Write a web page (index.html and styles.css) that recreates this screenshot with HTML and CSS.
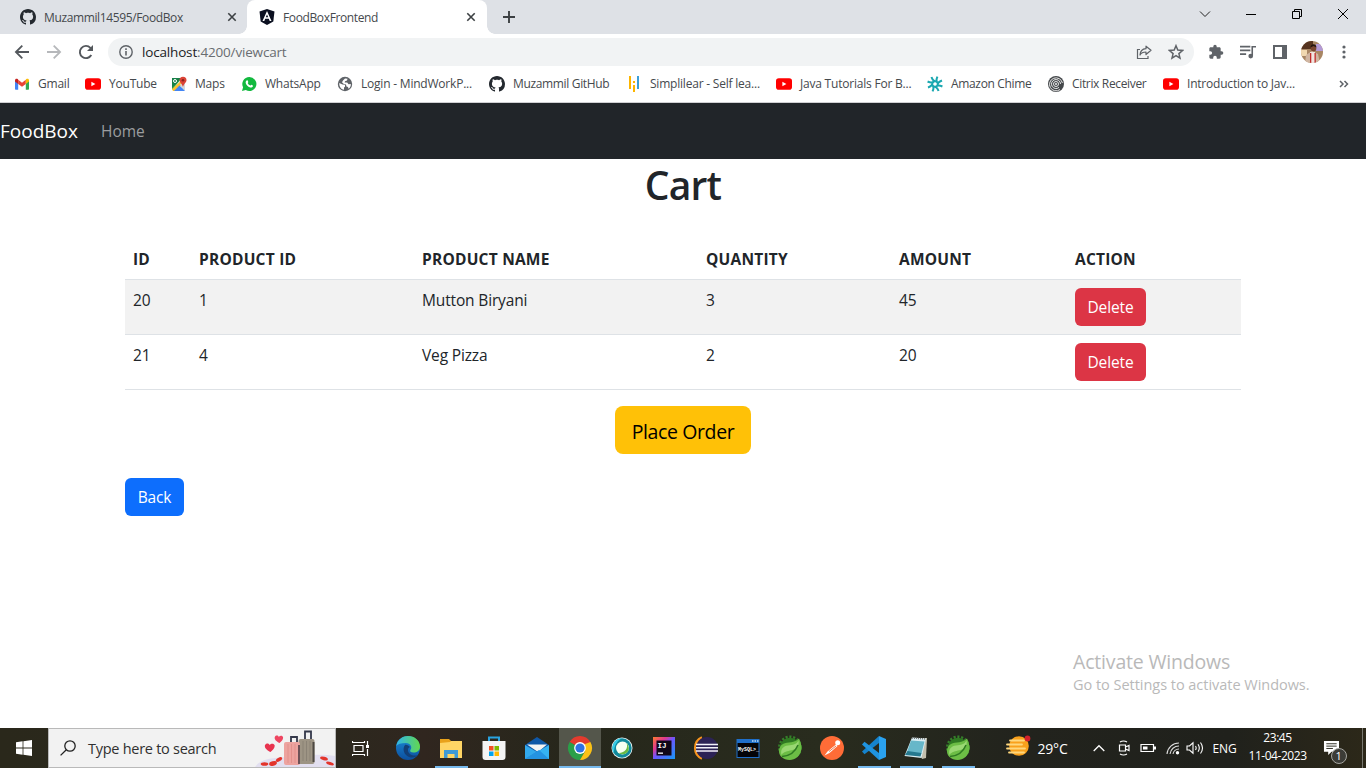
FILE: index.html
```html
<!DOCTYPE html>
<html lang="en">
<head>
<meta charset="utf-8">
<title>FoodBoxFrontend</title>
<link rel="stylesheet" href="styles.css">
</head>
<body>
<svg class="defs" aria-hidden="true">
  <symbol id="github" viewBox="0 0 16 16"><path fill="#24292f" d="M8 0C3.58 0 0 3.58 0 8c0 3.54 2.29 6.53 5.47 7.59.4.07.55-.17.55-.38 0-.19-.01-.82-.01-1.49-2.01.37-2.53-.49-2.69-.94-.09-.23-.48-.94-.82-1.13-.28-.15-.68-.52-.01-.53.63-.01 1.08.58 1.23.82.72 1.21 1.87.87 2.33.66.07-.52.28-.87.51-1.07-1.78-.2-3.64-.89-3.64-3.95 0-.87.31-1.59.82-2.15-.08-.2-.36-1.02.08-2.12 0 0 .67-.21 2.2.82.64-.18 1.32-.27 2-.27s1.36.09 2 .27c1.53-1.04 2.2-.82 2.2-.82.44 1.1.16 1.92.08 2.12.51.56.82 1.27.82 2.15 0 3.07-1.87 3.75-3.65 3.95.29.25.54.73.54 1.48 0 1.07-.01 1.93-.01 2.2 0 .21.15.46.55.38A8.01 8.01 0 0 0 16 8c0-4.42-3.58-8-8-8z"/></symbol>
  <symbol id="youtube" viewBox="0 0 16 16"><rect y="2.3" width="16" height="11.4" rx="2.8" fill="#f00"/><path d="M6.4 5.7v4.6L10.4 8z" fill="#fff"/></symbol>
  <symbol id="cross" viewBox="0 0 10 10"><path d="M1.3 1.3l7.4 7.4M8.7 1.3L1.3 8.7" stroke="#3c4043" stroke-width="1.6" fill="none"/></symbol>
  <symbol id="spring" viewBox="0 0 26 26"><circle cx="13" cy="13" r="10.3" fill="#2f7a22"/><circle cx="13" cy="12.500" r="10.800" fill="none" stroke="#35802a" stroke-width="2.4" stroke-dasharray="2.1 1.74"/><path d="M22 3.500c3.500 7 3.500 14-1.500 18.500-5 4.300-12 3.500-16 0C.5 18 1.500 11.500 6 9c4.500-2.500 12-.5 16-5.500z" fill="#6cbd45"/><path d="M21.500 5.500c1 5-2 8.500-7 9.800-4 1-8 1.200-10 4.700C3 14 6.500 11 11 10.500c5-.4 8.500-1 10.500-5z" fill="#9ad873"/><path d="M5 21.500c7-.5 13-4 16-11.500" fill="none" stroke="#2f7a22" stroke-width="1.500"/></symbol>
</svg>

<header class="tabstrip">
  <div class="tab">
    <svg class="i16"><use href="#github"/></svg>
    <span class="tab-title">Muzammil14595/FoodBox</span>
    <svg class="i10"><use href="#cross"/></svg>
  </div>
  <div class="tab active">
    <svg class="i16" viewBox="0 0 16 16"><path d="M8 0l7.500 2.600-1.200 10L8 16l-6.300-3.400L.5 2.600z" fill="#0b1020"/><path d="M8 2L3.500 12h1.800l.9-2.300h3.600l.9 2.300h1.800zm0 3.400l1.200 2.900H6.800z" fill="#fff"/></svg>
    <span class="tab-title">FoodBoxFrontend</span>
    <svg class="i10"><use href="#cross"/></svg>
  </div>
  <svg class="newtab" viewBox="0 0 12 12"><path d="M6 0v12M0 6h12" stroke="#3c4043" stroke-width="1.900"/></svg>
  <div class="winctl">
    <svg viewBox="0 0 12 12"><path d="M1 3.500l5 5 5-5" stroke="#222" fill="none"/></svg>
    <svg viewBox="0 0 12 12"><path d="M1 6.500h10" stroke="#000"/></svg>
    <svg viewBox="0 0 12 12"><path d="M1.500 3.500h7v7h-7zM3.500 3.500v-2h7v7h-2" stroke="#000" fill="none"/></svg>
    <svg viewBox="0 0 12 12"><path d="M1 1l10 10M11 1L1 11" stroke="#000" fill="none"/></svg>
  </div>
</header>

<div class="toolbar">
  <svg class="nav" viewBox="0 0 16 16"><path d="M15 8H2M8.300 1.600L1.900 8l6.400 6.400" stroke="#54585d" stroke-width="1.800" fill="none"/></svg>
  <svg class="nav" viewBox="0 0 16 16"><path d="M1 8h13M7.700 1.600L14.100 8l-6.400 6.400" stroke="#b6b8bb" stroke-width="1.800" fill="none"/></svg>
  <svg class="nav" viewBox="0 0 16 16"><path d="M13.300 11a6.100 6.100 0 1 1-.9-7.200L14 5.400" stroke="#54585d" stroke-width="1.900" fill="none"/><path d="M15 1v6H9z" fill="#54585d"/></svg>
  <div class="omnibox">
    <svg class="i14" viewBox="0 0 14 14"><circle cx="7" cy="7" r="6.200" stroke="#5f6368" stroke-width="1.400" fill="none"/><path d="M7 6v4.500M7 3.300v1.600" stroke="#5f6368" stroke-width="1.600"/></svg>
    <span class="url"><b>localhost</b>:4200/viewcart</span>
    <svg class="i16 share" viewBox="0 0 16 16"><path d="M4 5.500H1.500v9h10.500V12" stroke="#5f6368" stroke-width="1.200" fill="none"/><path d="M10 2.200l5 4.100-5 4.200V8C7 8 5 9 4 11c.2-3.500 2-6 6-6.300z" stroke="#5f6368" stroke-width="1.200" fill="none" stroke-linejoin="round"/></svg>
    <svg class="i16" viewBox="0 0 16 16"><path d="M8 1.700l1.800 4.400 4.700.4-3.600 3.100 1.100 4.600L8 11.700l-4 2.500 1.100-4.600-3.600-3.100 4.700-.4z" stroke="#5f6368" stroke-width="1.500" fill="none"/></svg>
  </div>
  <div class="actions">
    <svg viewBox="0 0 24 24"><path fill="#5f6368" d="M20.500 11H19V7c0-1.100-.9-2-2-2h-4V3.500a2.500 2.500 0 0 0-5 0V5H4c-1.100 0-2 .9-2 2v3.800h1.500a2.700 2.700 0 0 1 0 5.400H2V20c0 1.100.9 2 2 2h3.800v-1.500a2.700 2.700 0 0 1 5.400 0V22H17c1.100 0 2-.9 2-2v-4h1.500a2.500 2.500 0 0 0 0-5z"/></svg>
    <svg viewBox="0 0 17 17"><path d="M0 2.800h11M0 6.800h11M0 10.800h6.500M13 12.500V2.900h4" stroke="#5f6368" stroke-width="1.700" fill="none"/><circle cx="11.400" cy="12.800" r="2.500" fill="#5f6368"/></svg>
    <svg viewBox="0 0 16 16"><path d="M2 2h12v12H2z" stroke="#5f6368" stroke-width="2" fill="none"/><path d="M10 2h5v12h-5z" fill="#5f6368"/></svg>
    <svg class="avatar" viewBox="0 0 22 22"><clipPath id="av"><circle cx="11" cy="11" r="11"/></clipPath><g clip-path="url(#av)"><path fill="#a88664" d="M0 0h22v22H0z"/><path fill="#56331f" d="M0 0h12v8H0z"/><path fill="#b39ad6" d="M15 3h7v7h-7z"/><path fill="#f0d8b0" d="M0 9h6v6H0z"/><path fill="#d0b6a2" d="M5 14l6-4 6 3 2 9H4z"/><path fill="#f0e6e0" d="M9 11h5v11H9z"/><path fill="#c02c2c" d="M9 12h1.300v10H9zM13.500 12h1.300v10h-1.300z"/><circle cx="12.500" cy="7.500" r="2.800" fill="#7a4630"/><path fill="#24150f" d="M9.500 6.500c0-4.500 6-4.500 6 0l-3-1.500z"/></g></svg>
    <svg class="dots" viewBox="0 0 16 16"><g fill="#5f6368"><circle cx="8" cy="3" r="1.600"/><circle cx="8" cy="8" r="1.600"/><circle cx="8" cy="13" r="1.600"/></g></svg>
  </div>
</div>

<nav class="bookmarks">
  <a><svg class="i16" viewBox="0 0 16 16"><path fill="#4285f4" d="M1 4.500V13a.8.8 0 0 0 .8.800h2.400V7z"/><path fill="#34a853" d="M15 4.500V13a.8.8 0 0 1-.8.800h-2.400V7z"/><path fill="#ea4335" d="M4.200 3.800L8 6.700l3.800-2.900v4.100L8 10.800 4.200 7.900z"/><path fill="#c5221f" d="M1 4.300c0-1.800 1.700-2 2.700-1.200l.5.700v4.100L1 5.500z"/><path fill="#fbbc04" d="M15 4.300c0-1.800-1.700-2-2.700-1.200l-.5.700v4.100L15 5.500z"/></svg><span>Gmail</span></a>
  <a><svg class="i16"><use href="#youtube"/></svg><span>YouTube</span></a>
  <a><svg class="i16" viewBox="0 0 16 16"><path fill="#34a853" d="M1 2h10L1 14z"/><path fill="#188048" d="M1 2h9L6 7 1 12z"/><path fill="#fbc02d" d="M1 13L12 3l2 3L4 15H2z"/><path fill="#d5d8dc" d="M9 8l5-1v7.500L11 13z"/><path fill="#4285f4" d="M3 15l5.500-5.500L14 15z"/><circle cx="4" cy="5" r="1.500" fill="none" stroke="#fff"/><path fill="#db4437" d="M12 .8a3.500 3.500 0 0 1 3.500 3.500C15.500 6.500 12.700 8 12 11c-.7-3-3.500-4.500-3.500-6.700A3.500 3.500 0 0 1 12 .8z"/><circle cx="12" cy="4.200" r="1.300" fill="#8c241b"/></svg><span>Maps</span></a>
  <a><svg class="i16" viewBox="0 0 16 16"><path fill="#12b93f" d="M8.200 1a7 7 0 1 1-3.400 13L1 15l1.100-3.700A7 7 0 0 1 8.200 1z"/><path fill="#fff" d="M5.600 4.600c.8-.6 1.200-.2 1.700 1.500.1.500-.7.800-.5 1.200.6 1.200 1.400 1.800 2.400 2.200.4.100.8-1 1.200-.8 1.600.8 1.700.9 1.500 1.500-.3 1-1.700 1.500-2.700 1.200C6.700 10.700 5 8.700 4.700 7c-.1-.9.200-1.900.9-2.400z"/></svg><span>WhatsApp</span></a>
  <a><svg class="i16" viewBox="0 0 16 16"><circle cx="8" cy="8" r="7.200" fill="#5f6368"/><path fill="#fff" d="M2.300 7l3.200 1.500 2.500.3v2l-1 .7v2.300C4 13.500 2 10.500 2.300 7zM8 2.500l2.500.3-.5 1.700-2 .8-.3 1.200h2.500l1.300 1.800 2.300-.3c.3 2-.8 3.800-2.300 4.800l-.5-1.800-1.500-.5L9 8.500 6.500 7.800 5 6.300l1-1.800z"/></svg><span>Login - MindWorkP...</span></a>
  <a><svg class="i16"><use href="#github"/></svg><span class="tight">Muzammil GitHub</span></a>
  <a><svg class="i16" viewBox="0 0 16 16"><path fill="#fcb500" d="M3 0h2v13H3zM7 5h2v2H7zM7 9h2v7H7z"/><path fill="#3b9fd9" d="M11 0h2v13h-2z"/></svg><span>Simplilear - Self lea...</span></a>
  <a><svg class="i16"><use href="#youtube"/></svg><span>Java Tutorials For B...</span></a>
  <a><svg class="i16" viewBox="-8 -8 16 16"><g stroke="#19a7b0" stroke-width="2" fill="none"><path id="ray" d="M2.500 1.500C2.500-2 4.500-2.500 7-3.500"/><use href="#ray" transform="rotate(45)"/><use href="#ray" transform="rotate(90)"/><use href="#ray" transform="rotate(135)"/><use href="#ray" transform="rotate(180)"/><use href="#ray" transform="rotate(225)"/><use href="#ray" transform="rotate(270)"/><use href="#ray" transform="rotate(315)"/></g></svg><span class="tight">Amazon Chime</span></a>
  <a><svg class="i16" viewBox="0 0 16 16"><circle cx="8" cy="8" r="8" fill="#45484b"/><g fill="none" stroke="#e8e8e8" stroke-width="1"><path d="M12 13.500A6.500 6.500 0 1 1 14.400 7M11 11.400A4.500 4.500 0 1 1 12.500 8"/><circle cx="8" cy="8" r="2.500"/></g><circle cx="8" cy="8" r="1" fill="#eee"/></svg><span class="tight">Citrix Receiver</span></a>
  <a><svg class="i16"><use href="#youtube"/></svg><span>Introduction to Jav...</span></a>
  <svg class="more" viewBox="0 0 10 8"><path d="M1 1l3 3-3 3M5.500 1l3 3-3 3" stroke="#5f6368" stroke-width="1.500" fill="none"/></svg>
</nav>

<div class="navbar"><span class="brand">FoodBox</span><a>Home</a></div>

<main class="page">
  <h1>Cart</h1>
  <table class="cart">
    <colgroup><col class="c1"><col class="c2"><col class="c3"><col class="c4"><col class="c5"><col class="c6"></colgroup>
    <thead><tr><th>ID</th><th>PRODUCT ID</th><th>PRODUCT NAME</th><th>QUANTITY</th><th>AMOUNT</th><th>ACTION</th></tr></thead>
    <tbody>
      <tr><td>20</td><td>1</td><td>Mutton Biryani</td><td>3</td><td>45</td><td><button class="btn danger">Delete</button></td></tr>
      <tr><td>21</td><td>4</td><td>Veg Pizza</td><td>2</td><td>20</td><td><button class="btn danger">Delete</button></td></tr>
    </tbody>
  </table>
  <div class="order"><button class="btn warning">Place Order</button></div>
  <button class="btn primary">Back</button>
  <div class="watermark"><div class="wm-title">Activate Windows</div><div class="wm-text">Go to Settings to activate Windows.</div></div>
</main>

<footer class="taskbar">
  <div class="start"><svg viewBox="0 0 16 16"><path fill="#fff" d="M0 2.200l6.600-.9v6.300H0zM7.400 1.200L16 0v7.600H7.400zM0 8.400h6.600v6.300L0 13.800zM7.400 8.400H16V16l-8.600-1.200z"/></svg></div>
  <div class="search">
    <svg class="i16" viewBox="0 0 16 16"><circle cx="10" cy="6" r="5.200" fill="none" stroke="#222" stroke-width="1.300"/><path d="M6.300 9.700L.6 15.400" stroke="#222" stroke-width="1.300"/></svg>
    <span>Type here to search</span>
    <svg class="luggage" viewBox="0 0 80 38">
      <path d="M0 38q5-8 20-9l30-3q20-1 30 1v11z" fill="#e2dff0"/>
      <path d="M36 14V8h6v6M50 11V2.500h6V11" fill="none" stroke="#34384a" stroke-width="1.800"/>
      <rect x="43.500" y="10" width="16" height="25" rx="2" fill="#9d9484"/><path d="M48 12v20M51.500 12v20M55 12v20" stroke="#8a8275"/><path d="M58.500 13v20" stroke="#4d4943" stroke-width="2"/>
      <rect x="29" y="13" width="16" height="23" rx="2" fill="#eda39f"/><path d="M33 15v19M36.500 15v19M40 15v19" stroke="#e2918c"/><path d="M44 16v19" stroke="#6d5257" stroke-width="2"/>
      <path d="M15.500 23c-3-1.500-6.500-4-5.500-7 1-2.300 4-2 4.700 0 1.300-2 4.500-1.800 5 .6.300 2.600-2 4.800-4.200 6.400z" fill="#e8344f"/>
      <path d="M24.500 14c-3-1.500-5.500-3.500-4.700-6 1-2 3.400-1.700 4 0 1.200-1.700 4-1.500 4.300.5.200 2.300-1.700 4-3.600 5.500z" fill="#ee4560"/>
      <g fill="#e3342b"><ellipse cx="9.500" cy="35" rx="3.800" ry="1.800"/><ellipse cx="18" cy="34.500" rx="4" ry="2.200" transform="rotate(-15 18 34.500)"/><ellipse cx="24" cy="30.500" rx="3.500" ry="1.800" transform="rotate(-30 24 30.500)"/><ellipse cx="69" cy="29.500" rx="4" ry="1.700" transform="rotate(15 69 29.500)"/><ellipse cx="75" cy="34.500" rx="4" ry="1.500" transform="rotate(15 75 34.500)"/></g>
    </svg>
  </div>
  <div class="taskview"><svg viewBox="0 0 17 17"><path d="M2 5.500h9v6H2zM.5 1v1.500h12V1M.5 16v-1.500h12V16M15.500 1v4M15.500 9v7" fill="none" stroke="#fff" stroke-width="1.200"/><path d="M14 5h3v3h-3z" fill="#fff"/></svg></div>
  <div class="apps">
    <div class="app wide"><svg viewBox="0 0 26 26"><defs><linearGradient id="eg" x1="0" x2="1"><stop stop-color="#2fb4ec"/><stop offset="1" stop-color="#62d84e"/></linearGradient><linearGradient id="eb" x1="0" y1="0" x2="0" y2="1"><stop stop-color="#1b8ad6"/><stop offset="1" stop-color="#0c4f9e"/></linearGradient></defs><circle cx="13" cy="13" r="12" fill="url(#eb)"/><path d="M1.200 11C2.500 4 8 1 13 1c7 0 12 5 12 10.500 0 4-3 6-6.500 6-3 0-4-1.500-3-2.800 2-2.500 0-6.700-4.500-6.700-5 0-8.500 1-9.800 3z" fill="url(#eg)"/><path d="M10 10c-3 4-1 10 4 12 4 1.300 7 .2 9-2-3 1.300-7 .5-9-2-1.500-2-1.500-5 1-6-2-2-4-2.500-5-2z" fill="#123f77"/></svg></div>
    <div class="app wide open"><svg viewBox="0 0 26 26"><path d="M2 4h9l2 2h11v17H2z" fill="#e9a21b"/><path d="M2 8l10-1 1-1h11v17H2z" fill="#ffd565"/><path d="M6 15h14v8h-3.500v-4h-7v4H6z" fill="#3f9ad6"/></svg></div>
    <div class="app wide"><svg viewBox="0 0 26 26"><path d="M8 7V2.500h10V7" fill="none" stroke="#29a3e0" stroke-width="2"/><path d="M1.500 6h23v16a3 3 0 0 1-3 3h-17a3 3 0 0 1-3-3z" fill="#f4f4f4"/><path fill="#f25022" d="M8 11h4.500v4.500H8z"/><path fill="#7fba00" d="M13.500 11H18v4.500h-4.500z"/><path fill="#00a4ef" d="M8 16.500h4.500V21H8z"/><path fill="#ffb900" d="M13.500 16.500H18V21h-4.500z"/></svg></div>
    <div class="app wide"><svg viewBox="0 0 26 26"><path d="M1 10L13 2l12 8v14H1z" fill="#0f58a7"/><path d="M3 9.500h20L14 17z" fill="#f4f4f4"/><path d="M1 10l12 7-12 7z" fill="#32a9ed"/><path d="M25 10v14H1z" fill="#35b2f2"/><path d="M1 24l14-9 10 9z" fill="#2493e2"/></svg></div>
    <div class="app open current"><svg viewBox="0 0 26 26"><path d="M13 13L2.600 7A12 12 0 0 1 23.400 7z" fill="#e33b2e"/><path d="M2.600 7A12 12 0 0 0 13 25l5.200-9L13 13z" fill="#2a9f49"/><path d="M23.400 7A12 12 0 0 1 13 25l5.200-9L13 7z" fill="#fbc116"/><path d="M23.400 7H13v4z" fill="#e33b2e"/><circle cx="13" cy="13" r="5.900" fill="#fff"/><circle cx="13" cy="13" r="4.600" fill="#2f72e4"/></svg></div>
    <div class="app"><svg viewBox="0 0 26 26"><circle cx="13" cy="13" r="10.500" fill="#e8f2f3"/><circle cx="13" cy="13" r="9.700" fill="#10899c"/><path d="M13 3.300a9.700 9.700 0 0 0-8 15C5 10 8 6 13 3.300z" fill="#37cde8"/><circle cx="13.500" cy="13" r="6.500" fill="#f6fff2"/><path d="M17.500 8c2 5-1 9.500-8 10 5 3.500 12-.5 10-6.500-.4-1.500-1-2.700-2-3.500z" fill="#68ba45"/></svg></div>
    <div class="app"><svg viewBox="0 0 26 26"><defs><linearGradient id="ij" x1="0" y1="0" x2="1" y2="1"><stop stop-color="#fd7b2d"/><stop offset=".3" stop-color="#e0388e"/><stop offset=".5" stop-color="#6b57ff"/><stop offset="1" stop-color="#1699f5"/></linearGradient></defs><path d="M2 2h22v22H2z" fill="url(#ij)"/><path d="M5.500 5.500h15v15h-15z" fill="#100718"/><text class="ij" x="6.500" y="13">IJ</text><path d="M7 17.500h5v1.300H7z" fill="#fff"/></svg></div>
    <div class="app"><svg viewBox="0 0 26 26"><path d="M9 2.500a11.500 11.500 0 0 0 0 21" fill="none" stroke="#f7941e" stroke-width="2.500"/><circle cx="14" cy="13" r="11" fill="#2c2255"/><path d="M3 9.500h22M3 12.800h22M3 16h22" stroke="#f3f1fa" stroke-width="1.600"/></svg></div>
    <div class="app"><svg viewBox="0 0 26 26"><path d="M1.500 4h23v19h-23z" fill="#1f6fc9"/><path d="M2.500 8h21v14h-21z" fill="#040408"/><path d="M17 5.200h1.500v1.500H17zM19.500 5.200H21v1.500h-1.500zM22 5.200h1.500v1.500H22z" fill="#b9d8f5"/><text class="sql" x="3" y="15.500">MySQL&gt;_</text></svg></div>
    <div class="app"><svg><use href="#spring"/></svg></div>
    <div class="app"><svg viewBox="0 0 26 26"><circle cx="13" cy="13" r="12" fill="#ff6c37"/><path d="M5.500 20.500l3-4 8.500-7 1.500 1.500-8 7z" fill="#fff"/><circle cx="18.700" cy="7.800" r="2.500" fill="#fff"/><path d="M10 16.500l7-5.500" stroke="#e05a2a" stroke-width=".8"/></svg></div>
    <div class="app open"><svg viewBox="0 0 26 26"><path d="M18 1l7 3v18l-7 3z" fill="#2aa2f0"/><path d="M18 1L1 16.500l2.500 2.700L18 8z" fill="#1583cd"/><path d="M18 25L1 9.500l2.500-2.700L18 18z" fill="#1f93e0"/></svg></div>
    <div class="app open"><svg viewBox="0 0 26 26"><path d="M10 3h14l-1 20-4 1z" fill="#c3bfae"/><path d="M9 2.500l14 1-4.500 19.500-17-2z" fill="#d9edf2"/><path d="M8 5.500l13.500 1-3 12L4 17z" fill="#67b7c9"/><path d="M4.500 16l14 2-1 3.500L2 20z" fill="#25798f"/><path d="M9 3l14 1" stroke="#777" stroke-width="1.500" stroke-dasharray="1 1"/></svg></div>
    <div class="app open"><svg><use href="#spring"/></svg></div>
  </div>
  <div class="tray">
    <svg class="weather" viewBox="0 0 26 22"><circle cx="14" cy="11" r="9.800" fill="#f9a11c"/><path d="M5 5.500h14M2 9.500h15M2 13.500h18M4 17.500h15" stroke="#ffd77c" stroke-width="1.800" stroke-linecap="round"/><circle cx="22.500" cy="3.500" r="2.900" fill="#d3222c"/></svg>
    <span class="temp">29°C</span>
    <svg class="chev" viewBox="0 0 12 8"><path d="M.7 7L6 1.700 11.300 7" fill="none" stroke="#fff" stroke-width="1.300"/></svg>
    <svg class="meet" viewBox="0 0 12 16"><path d="M1.500 5h6v6h-6zM7.500 7l3.500-1.500v5L7.500 9M2 2q3.500-2 7 0M2 14q3.500 2 7 0" fill="none" stroke="#fff" stroke-width="1.200"/></svg>
    <svg class="batt" viewBox="0 0 16 10"><path d="M1 1.500h12.500v7H1z" fill="none" stroke="#fff" stroke-width="1.200"/><path d="M3 3.500h4.500v3H3zM14 3.500h2v3h-2z" fill="#fff"/></svg>
    <svg class="wifi" viewBox="0 0 14 14"><path d="M1 13A12 12 0 0 1 13 2M4 13a9 9 0 0 1 9-8M7 13a6 6 0 0 1 6-5" fill="none" stroke="#ddd" stroke-width="1.100"/><circle cx="11.500" cy="11.800" r="1.700" fill="#fff"/></svg>
    <svg class="vol" viewBox="0 0 18 14"><path d="M1 5h2.500L7 1.800v10.400L3.500 9H1z" fill="none" stroke="#fff" stroke-width="1.100"/><path d="M9.500 5q1.300 2 0 4M12 3.300q2.600 3.700 0 7.400M14.500 1.500q4 5.500 0 11" fill="none" stroke="#fff" stroke-width="1.100"/></svg>
    <span class="lang">ENG</span>
    <div class="clock"><span>23:45</span><span>11-04-2023</span></div>
    <div class="notif"><svg viewBox="0 0 18 17"><path d="M1 1h16v11.500H9L5.500 16v-3.500H1z" fill="#fff"/><path d="M3.500 4h11M3.500 6.500h11M3.500 9h7" stroke="#26261c" stroke-width="1"/></svg><span class="badge">1</span></div>
  </div>
</footer>
</body>
</html>
```
FILE: styles.css
```css
* { box-sizing: border-box; }
body {
  margin: 0; width: 1366px; height: 768px; overflow: hidden;
  display: flex; flex-direction: column;
  font-family: "Open Sans", "Noto Sans", sans-serif; color: #212529; background: #fff;
}
svg { display: block; flex: none; }
.defs { position: absolute; width: 0; height: 0; }
.i10 { width: 10px; height: 10px; }
.i14 { width: 14px; height: 14px; }
.i16 { width: 16px; height: 16px; }

/* Tab strip */
.tabstrip { height: 34px; flex: none; background: #dee1e6; display: flex; align-items: stretch; }
.tab { display: flex; align-items: center; width: 247px; padding: 0 10px 0 20px; font-size: 12px; letter-spacing: -0.37px; color: #45494d; }
.tab-title { flex: 1; padding-left: 8px; white-space: nowrap; }
.tab.active {
  width: 240px; padding: 0 11px 0 12px; background: #fff; border-radius: 8px 8px 0 0; position: relative;
}
.tab.active::before, .tab.active::after {
  content: ""; position: absolute; bottom: 0; width: 8px; height: 8px;
}
.tab.active::before { left: -8px; background: radial-gradient(circle at 0 0, transparent 7.5px, #fff 8px); }
.tab.active::after { right: -8px; background: radial-gradient(circle at 100% 0, transparent 7.5px, #fff 8px); }
.newtab { width: 12px; height: 12px; margin: 11px 0 0 16px; }
.winctl { margin-left: auto; display: flex; gap: 34px; padding: 8px 17px 0 0; }
.winctl svg { width: 12px; height: 12px; }

/* Toolbar */
.toolbar { height: 36px; flex: none; display: flex; align-items: center; padding-left: 14px; }
.nav { width: 16px; height: 16px; margin-right: 16px; }
.omnibox { width: 1086px; height: 28px; margin-left: -2px; border-radius: 14px; background: #f1f3f4; display: flex; align-items: center; padding: 0 10px 0 11px; }
.url { flex: 1; padding-left: 9px; font-size: 13.5px; letter-spacing: -0.17px; color: #696d71; }
.url b { font-weight: 400; color: #202124; }
.share { margin-right: 16px; }
.actions { flex: 1; display: flex; align-items: center; gap: 16px; padding-left: 14px; }
.actions svg { width: 16px; height: 16px; }
.actions .avatar { width: 22px; height: 22px; margin-left: -3px; }
.actions .dots { margin-left: -3px; }

/* Bookmarks */
.bookmarks {
  height: 33px; flex: none; display: grid; align-items: center; padding: 0 0 5px 14px; border-bottom: 1px solid #d0d0d3;
  grid-template-columns: 71px 86px 70px 96px 152px 137px 150px 151px 121px 115px 176px 10px;
  font-size: 12px; letter-spacing: -0.21px; color: #45494d; white-space: nowrap;
}
.bookmarks a { display: flex; align-items: center; gap: 8px; }
.tight { letter-spacing: -0.34px; }
.more { width: 10px; height: 8px; }

/* Page */
.navbar { height: 56px; flex: none; background: #212529; display: flex; align-items: center; }
.brand { font-size: 19px; letter-spacing: 0; color: #fff; width: 101px; }
.navbar a { font-size: 15.5px; letter-spacing: -0.05px; color: #9b9d9f; }
.page { flex: 1; width: 1116px; margin: 0 auto; position: relative; }
h1 { margin: 2px 0 32px; text-align: center; font-size: 39px; font-weight: 600; line-height: 48px; letter-spacing: -0.8px; }
.cart { width: 1116px; table-layout: fixed; border-collapse: collapse; font-size: 15.5px; line-height: 24px; letter-spacing: -0.15px; }
.c1 { width: 66px; } .c2 { width: 223px; } .c3 { width: 284px; } .c4 { width: 193px; } .c5 { width: 176px; } .c6 { width: 174px; }
.cart th, .cart td { padding: 8px; text-align: left; vertical-align: top; border-bottom: 1px solid #dee2e6; }
.cart th { font-size: 15.5px; font-weight: 700; letter-spacing: 0.22px; padding: 6px 8px 8px; }
.cart tbody tr:first-child { background: #f2f2f2; }
.btn { display: block; border: 0; border-radius: 6px; height: 38px; font: 15.5px/24px "Open Sans", sans-serif; letter-spacing: -0.13px; color: #fff; padding: 7px 0; text-align: center; }
.danger { width: 71px; background: #dc3545; }
.primary { width: 59px; background: #0d6efd; }
.warning { width: 136px; height: 48px; border-radius: 8px; background: #ffc107; color: #000; font-size: 19.5px; line-height: 30px; letter-spacing: -0.38px; margin: 0 auto; padding: 11px 0 7px; }
.order { padding: 16px 0 24px; }
.watermark { position: absolute; left: 948px; top: 490px; white-space: nowrap; }
.wm-title { font-size: 19.5px; line-height: 26px; letter-spacing: -0.18px; color: #b9b9b9; }
.wm-text { font-size: 14.5px; line-height: 19px; letter-spacing: -0.03px; color: #b9b9b9; }

/* Taskbar */
.taskbar { height: 40px; flex: none; display: flex; color: #fff; background: linear-gradient(90deg, #2a281b, #2c281e 25%, #30261f 31%, #26271b 42%, #292c1e 60%, #22231d 75%, #20211c 90%, #2c2819); }
.start { width: 48px; flex: none; display: grid; place-items: center; }
.start svg { width: 16px; height: 16px; }
.search { width: 288px; flex: none; background: #f2f2f2; border: 1px solid #b9b9b9; display: flex; align-items: center; padding-left: 11px; font-size: 14.5px; letter-spacing: -0.27px; color: #303030; }
.search span { flex: 1; padding-left: 12px; }
.luggage { width: 80px; height: 38px; }
.taskview { width: 48px; flex: none; margin-right: 2.6px; display: grid; place-items: center; }
.taskview svg { width: 17px; height: 17px; }
.apps { display: flex; flex: none; }
.app { width: 42.1px; flex: none; height: 40px; display: flex; flex-direction: column; align-items: center; padding-top: 7px; }
.app.wide { width: 43px; }
.app svg { width: 26px; height: 26px; }
.open::after { content: ""; width: 33px; height: 2px; margin-top: 5px; background: #76b9ed; }
.current { background: #54564b; }
.current::after { width: 100%; }
.ij { font: 700 7.5px "Liberation Mono", monospace; fill: #fff; }
.sql { font: 700 5px "Liberation Mono", monospace; fill: #fff; }
.tray { flex: 1; display: flex; align-items: center; padding-left: 25px; white-space: nowrap; }
.weather { width: 26px; height: 22px; margin-top: -5px; }
.temp { width: 62px; flex: none; padding-left: 7px; font-size: 14px; letter-spacing: -0.21px; }
.chev { width: 12px; height: 8px; margin-right: 13px; }
.meet { width: 12px; height: 16px; margin-right: 10px; }
.batt { width: 16px; height: 10px; margin-right: 10px; }
.wifi { width: 14px; height: 14px; margin-right: 6px; }
.vol { width: 18px; height: 14px; margin-right: 9px; }
.lang { width: 36px; flex: none; font-size: 12px; letter-spacing: -0.15px; }
.clock { width: 58px; flex: none; display: flex; flex-direction: column; align-items: center; font-size: 12px; line-height: 18px; letter-spacing: -0.45px; padding-bottom: 2px; }
.notif { flex: 1; height: 40px; margin-right: 3px; padding: 12px 0 0 16px; border-right: 1px solid #77776f; position: relative; }
.notif svg { width: 17px; height: 16px; }
.badge { position: absolute; left: 24px; top: 20px; width: 16px; height: 16px; border: 1px solid #a5a5a0; border-radius: 50%; background: #3c3c37; font-size: 11px; line-height: 13px; text-align: center; }
```
